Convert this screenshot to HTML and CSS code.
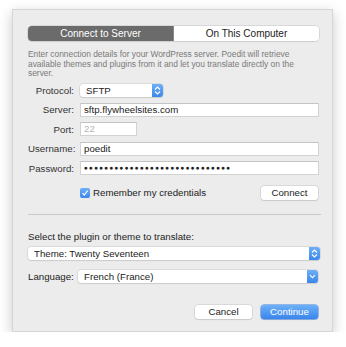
FILE: index.html
```html
<!DOCTYPE html>
<html lang="en">
<head>
    <meta charset="UTF-8">
    <title>Poedit - Connect to Server</title>
    <link rel="stylesheet" href="styles.css">
</head>
<body>
    <div class="window">
        <div class="segmented">
            <div class="seg seg-active">Connect to Server</div>
            <div class="seg">On This Computer</div>
        </div>

        <p class="desc">Enter connection details for your WordPress server. Poedit will retrieve available themes and plugins from it and let you translate directly on the server.</p>

        <div class="form">
            <label class="lbl">Protocol:</label>
            <div class="popup popup-small"><span>SFTP</span><span class="arrow"><svg width="7" height="9" viewBox="0 0 7 9"><path d="M1 3.5 L3.5 1 L6 3.5 M1 5.5 L3.5 8 L6 5.5" fill="none" stroke="#fff" stroke-width="1.1"/></svg></span></div>

            <label class="lbl">Server:</label>
            <div class="field">sftp.flywheelsites.com</div>

            <label class="lbl">Port:</label>
            <div class="field field-port">22</div>

            <label class="lbl">Username:</label>
            <div class="field">poedit</div>

            <label class="lbl">Password:</label>
            <div class="field field-pass">&#9679;&#9679;&#9679;&#9679;&#9679;&#9679;&#9679;&#9679;&#9679;&#9679;&#9679;&#9679;&#9679;&#9679;&#9679;&#9679;&#9679;&#9679;&#9679;&#9679;&#9679;&#9679;&#9679;&#9679;&#9679;&#9679;&#9679;&#9679;&#9679;</div>

            <span></span>
            <div class="remember">
                <span class="check"><svg width="8" height="8" viewBox="0 0 8 8"><path d="M1.5 4.2 L3.3 6 L6.6 1.6" fill="none" stroke="#fff" stroke-width="1.2"/></svg></span>
                <span class="check-text">Remember my credentials</span>
                <button class="btn btn-connect">Connect</button>
            </div>
        </div>

        <hr class="sep">

        <div class="select-label">Select the plugin or theme to translate:</div>
        <div class="popup popup-wide"><span>Theme: Twenty Seventeen</span><span class="arrow"><svg width="7" height="9" viewBox="0 0 7 9"><path d="M1 3.5 L3.5 1 L6 3.5 M1 5.5 L3.5 8 L6 5.5" fill="none" stroke="#fff" stroke-width="1.1"/></svg></span></div>

        <div class="lang-row">
            <span class="lang-label">Language:</span>
            <div class="popup popup-lang"><span>French (France)</span><span class="arrow"><svg width="7" height="5" viewBox="0 0 7 5"><path d="M1 1.2 L3.5 3.7 L6 1.2" fill="none" stroke="#fff" stroke-width="1.1"/></svg></span></div>
        </div>

        <div class="actions">
            <button class="btn btn-cancel">Cancel</button>
            <button class="btn btn-primary">Continue</button>
        </div>
    </div>
</body>
</html>
```

FILE: styles.css
```css
body {
    margin: 0;
    background-color: #ffffff;
    font-family: "Liberation Sans", Arial, sans-serif;
    color: #222;
}

.window {
    margin: 9px 0 0 12px;
    width: 321px;
    height: 323px;
    box-sizing: border-box;
    padding: 16px 13px 0 15px;
    background-color: #ececec;
    border: 1px solid #d6d6d6;
    box-shadow: 0 4px 12px rgba(0, 0, 0, 0.22);
}

.segmented {
    display: flex;
    height: 15px;
    border-radius: 4px;
    overflow: hidden;
    box-shadow: 0 0 0 0.5px #c4c4c4, 0 1px 1px rgba(0, 0, 0, 0.08);
}

.seg {
    flex: 1;
    font-size: 10px;
    line-height: 15px;
    text-align: center;
    background-color: #ffffff;
    color: #222;
}

.seg-active {
    background-color: #6b6b6b;
    color: #ffffff;
    border-right: 1px solid #888;
}

.desc {
    margin: 9px 0 0 0;
    max-width: 272px;
    font-size: 8.4px;
    line-height: 9.7px;
    color: #7a7a7a;
}

.form {
    display: grid;
    grid-template-columns: 46px 1fr;
    column-gap: 6px;
    row-gap: 5.5px;
    margin-top: 5px;
    align-items: center;
}

.lbl {
    text-align: right;
    font-size: 9.7px;
    color: #333;
}

.field {
    height: 14px;
    box-sizing: border-box;
    background-color: #ffffff;
    border: 1px solid #d2d2d2;
    border-top-color: #c4c4c4;
    font-size: 9.7px;
    line-height: 12px;
    padding: 0 3px;
    color: #222;
}

.field-port {
    width: 57px;
    color: #b4b4b4;
}

.field-pass {
    font-size: 6.6px;
    letter-spacing: 1.1px;
    padding-left: 3px;
}

.popup {
    display: flex;
    justify-content: space-between;
    align-items: stretch;
    height: 13px;
    background-color: #ffffff;
    border-radius: 3px;
    box-shadow: 0 0 0 0.5px #c9c9c9, 0 1px 1px rgba(0, 0, 0, 0.12);
    font-size: 9.7px;
    line-height: 13px;
    padding-left: 6px;
}

.popup-small {
    width: 83px;
    box-sizing: border-box;
}

.arrow {
    width: 11px;
    display: flex;
    align-items: center;
    justify-content: center;
    border-radius: 0 3px 3px 0;
    background: linear-gradient(#6eaff7, #3c86ec);
}

.remember {
    display: flex;
    align-items: center;
    margin-top: 5px;
    height: 14px;
}

.check {
    width: 10px;
    height: 10px;
    border-radius: 2px;
    background: linear-gradient(#6eaff7, #3c86ec);
    display: flex;
    align-items: center;
    justify-content: center;
}

.check-text {
    margin-left: 3px;
    font-size: 9.7px;
    flex: 1;
}

.btn {
    font-family: "Liberation Sans", Arial, sans-serif;
    font-size: 9.7px;
    height: 14px;
    width: 57px;
    padding: 0;
    border: none;
    border-radius: 3px;
    background-color: #ffffff;
    color: #222;
    box-shadow: 0 0 0 0.5px #c6c6c6, 0 1px 1px rgba(0, 0, 0, 0.12);
}

.btn-connect {
    margin-right: 1px;
}

.sep {
    margin: 14px 0 0 0;
    border: none;
    border-top: 1px solid #c9c9c9;
    width: 293px;
}

.select-label {
    margin-top: 16px;
    font-size: 9.7px;
    line-height: 12px;
}

.popup-wide {
    margin-top: 4px;
    width: 292px;
    box-sizing: border-box;
}

.lang-row {
    display: flex;
    align-items: center;
    margin-top: 10px;
}

.lang-label {
    font-size: 9.7px;
    width: 50px;
}

.popup-lang {
    width: 240px;
    box-sizing: border-box;
}

.actions {
    display: flex;
    justify-content: flex-end;
    gap: 9px;
    margin-top: 22px;
    padding-right: 1px;
}

.btn-primary {
    background: linear-gradient(#6cb0f8, #3b85eb);
    color: #ffffff;
    box-shadow: 0 0 0 0.5px #3a7fe0, 0 1px 1px rgba(0, 0, 0, 0.12);
}
```
